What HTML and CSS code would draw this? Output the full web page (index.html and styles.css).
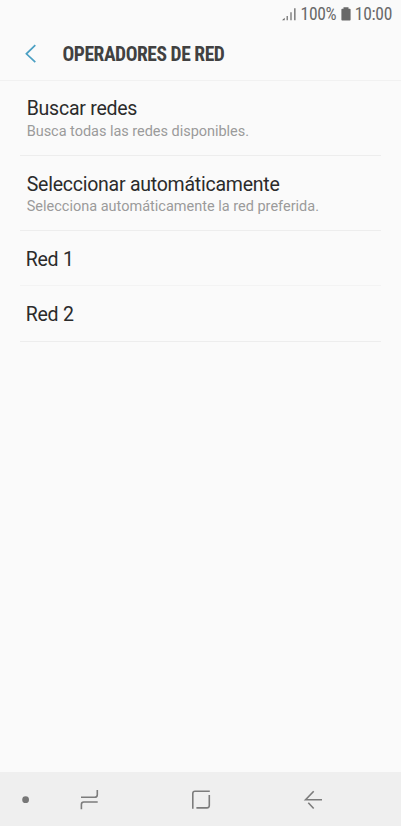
FILE: index.html
```html
<!DOCTYPE html>
<html lang="es">
<head>
<meta charset="utf-8">
<title>Operadores de red</title>
<link rel="stylesheet" href="styles.css">
</head>
<body>
<div class="screen">
  <div class="status">
    <svg class="signal" width="15" height="14" viewBox="0 0 15 14"><path d="M0 13.2L2.7 10.8V13.2ZM4.6 9H5.8V13.2H4.6ZM8.4 5.3H9.6V13.2H8.4ZM12.2 1.2H13.5V13.2H12.2Z"/></svg>
    <span class="percent">100%</span>
    <svg class="battery" width="10" height="14" viewBox="0 0 10 14"><path d="M2.5 0.3H7.5V1.8H8.8Q9.6 1.8 9.6 2.6V12.7Q9.6 13.5 8.8 13.5H1.2Q.4 13.5 .4 12.7V2.6Q.4 1.8 1.2 1.8H2.5Z"/></svg>
    <span class="clock">10:00</span>
  </div>
  <header class="header">
    <svg class="back" width="12" height="20" viewBox="0 0 12 20"><path d="M10.3 1.2L1.4 9.8L10.3 18.2"/></svg>
    <h1>OPERADORES DE RED</h1>
  </header>
  <main class="list">
    <div class="row tall"><div class="title">Buscar redes</div><div class="desc first">Busca todas las redes disponibles.</div></div>
    <div class="row tall second"><div class="title">Seleccionar automáticamente</div><div class="desc">Selecciona automáticamente la red preferida.</div></div>
    <div class="row short faint"><div class="title">Red 1</div></div>
    <div class="row short"><div class="title">Red 2</div></div>
  </main>
  <nav class="nav">
    <svg width="401" height="54" viewBox="0 0 401 54">
      <circle cx="25.6" cy="27.7" r="3.4"/>
      <path d="M81 25.3H94.7Q97.3 25.3 97.3 22.7V18M97.7 30H83.8Q81.4 30 81.4 32.5V37.3"/>
      <path d="M209.8 19.3H195Q192.8 19.3 192.8 21.5V36.8M196.4 35.9H207Q209.3 35.9 209.3 33.6V23"/>
      <path d="M322 27.7H305.6L313.7 19.2M308.3 30.8L313.7 36.5"/>
    </svg>
  </nav>
</div>
</body>
</html>
```
FILE: styles.css
```css
* { box-sizing: border-box; }
body { margin: 0; font-family: Roboto, sans-serif; background: #fafafa; }
.screen { width: 401px; height: 826px; display: flex; flex-direction: column; background: #fafafa; overflow: hidden; }
.status { height: 28px; display: flex; align-items: center; justify-content: flex-end; padding-right: 9px; color: #696969; font-family: "Roboto Condensed", Roboto, sans-serif; font-stretch: 75%; font-size: 17.5px; letter-spacing: -0.3px; line-height: 28px; flex: none; }
.status svg { fill: #696969; }
.signal { margin-right: 3.5px; }
.battery { margin: 0 4px 0 4.5px; }
.header { height: 53px; flex: none; border-bottom: 1px solid #f1f1f1; display: flex; align-items: center; padding: 0 0 0 25px; }
.back { fill: none; stroke: #4a9fc3; stroke-width: 1.7; }
h1 { margin: 1px 0 0 25.5px; font-family: "Roboto Condensed", Roboto, sans-serif; font-stretch: 75%; font-size: 19.5px; letter-spacing: -0.45px; line-height: 24px; font-weight: 700; color: #414141; white-space: nowrap; }
.list { flex: 1; padding: 0 20px; }
.row { border-bottom: 1px solid #ededed; padding-left: 6.7px; }
.faint { border-color: #f3f3f3; }
.tall { height: 75px; padding-top: 16px; }
.second { padding-top: 17px; }
.short { height: 55.4px; padding: 17px 0 0 5.7px; }
.title { font-size: 19.5px; letter-spacing: -0.24px; line-height: 24px; color: #2b2b2b; white-space: nowrap; }
.desc { font-size: 14.5px; line-height: 18px; margin-top: 2px; color: #9b9b9b; white-space: nowrap; }
.second .desc { margin-top: 1px; }
.first { letter-spacing: -0.03px; }
.nav { height: 54px; flex: none; background: #efefef; }
.nav svg { display: block; fill: none; stroke: #7c7c7c; stroke-width: 1.6; }
.nav circle { fill: #777; stroke: none; }
```
